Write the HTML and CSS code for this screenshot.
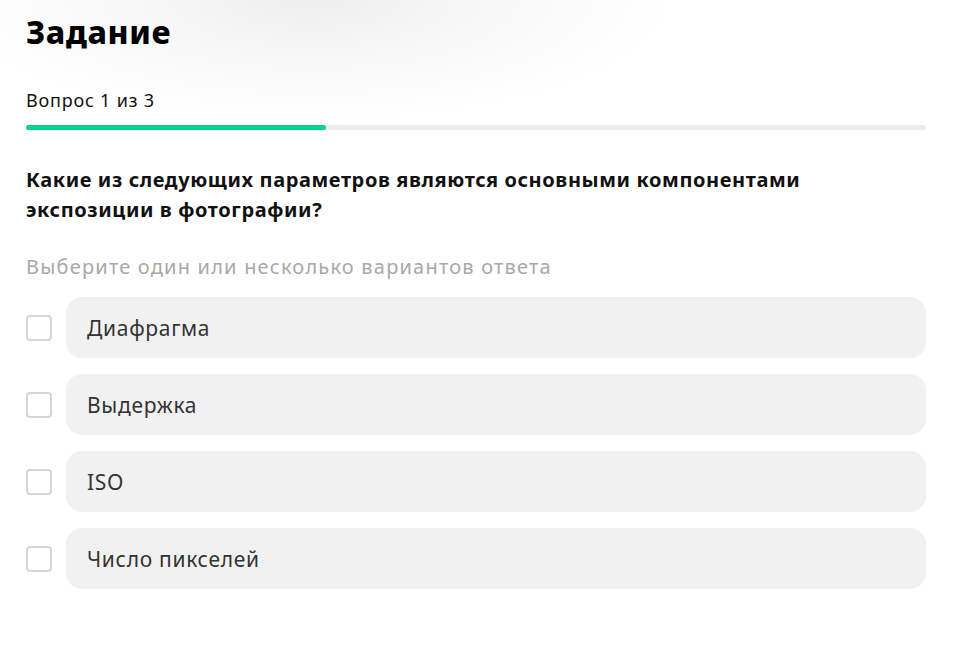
FILE: index.html
```html
<!DOCTYPE html>
<html lang="ru">
<head>
    <meta charset="UTF-8">
    <meta name="viewport" content="width=device-width, initial-scale=1.0">
    <title>Задание</title>
    <link rel="stylesheet" href="styles.css">
</head>
<body>

    <div class="task">
        <!-- Заголовок -->
        <h1 class="task-title">Задание</h1>

        <!-- Прогресс -->
        <div class="progress-label">Вопрос 1 из 3</div>
        <div class="progress-track">
            <div class="progress-fill"></div>
        </div>

        <!-- Вопрос -->
        <p class="question">Какие из следующих параметров являются основными компонентами экспозиции в фотографии?</p>
        <p class="hint">Выберите один или несколько вариантов ответа</p>

        <div class="answers">
            <label class="answer">
                <input type="checkbox" class="answer-check">
                <span class="answer-box">Диафрагма</span>
            </label>
            <label class="answer">
                <input type="checkbox" class="answer-check">
                <span class="answer-box">Выдержка</span>
            </label>
            <label class="answer">
                <input type="checkbox" class="answer-check">
                <span class="answer-box">ISO</span>
            </label>
            <label class="answer">
                <input type="checkbox" class="answer-check">
                <span class="answer-box">Число пикселей</span>
            </label>
        </div>
    </div>

</body>
</html>
```

FILE: styles.css
```css
body {
    margin: 0;
    font-family: "Noto Sans", Arial, sans-serif;
    color: #111;
    background: radial-gradient(ellipse 360px 120px at 310px 0px, #eeeeee 0%, #f7f7f7 45%, #ffffff 100%);
    background-repeat: no-repeat;
    background-color: #fff;
}
.task {
    width: 900px;
    padding: 12px 26px 0 26px;
}
.task-title {
    margin: 0;
    font-size: 32px;
    font-weight: 800;
    line-height: 40px;
    letter-spacing: 0.6px;
    color: #000;
}
.progress-label {
    margin-top: 36px;
    font-size: 18px;
    line-height: 24px;
    letter-spacing: 0.8px;
    color: #111;
}
.progress-track {
    margin-top: 13px;
    height: 5px;
    border-radius: 3px;
    background: #ececec;
}
.progress-fill {
    width: 300px;
    height: 100%;
    border-radius: 3px;
    background: #00d38c;
}
.question {
    margin: 35px 0 0 0;
    max-width: 810px;
    font-size: 20px;
    font-weight: 700;
    line-height: 30px;
    letter-spacing: 0.6px;
    color: #111;
}
.hint {
    margin: 29px 0 0 0;
    font-size: 20px;
    line-height: 26px;
    letter-spacing: 1.2px;
    color: #a8a8a8;
}
.answers {
    margin-top: 17px;
    display: flex;
    flex-direction: column;
    gap: 16px;
}
.answer {
    display: flex;
    align-items: center;
    gap: 14px;
    cursor: pointer;
}
.answer-check {
    appearance: none;
    margin: 0;
    width: 26px;
    height: 26px;
    border: 2px solid #d6d6d6;
    border-radius: 4px;
    background: #fff;
    flex-shrink: 0;
}
.answer-box {
    flex: 1;
    height: 61px;
    display: flex;
    align-items: center;
    padding-left: 21px;
    border-radius: 16px;
    background: #f1f1f1;
    font-size: 21px;
    letter-spacing: 0.7px;
    color: #333;
}
```
